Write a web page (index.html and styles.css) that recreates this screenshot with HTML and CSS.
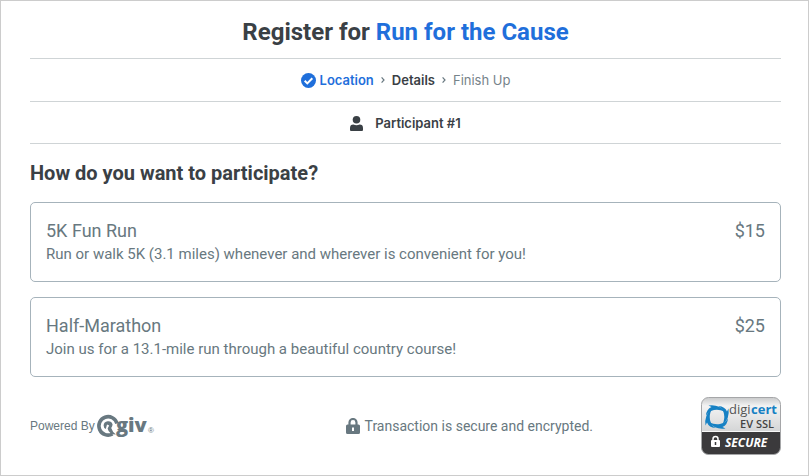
FILE: index.html
```
<!DOCTYPE html>
<html lang="en">
<head>
    <meta charset="UTF-8">
    <meta name="viewport" content="width=device-width, initial-scale=1.0">
    <title>Register for Run for the Cause</title>
    <link rel="stylesheet" href="styles.css">
</head>
<body>
    <div class="page">
        <header class="header">
            <h1>Register for <span class="event-name">Run for the Cause</span></h1>
        </header>

        <nav class="steps" aria-label="Progress">
            <a href="#location" class="step done">
                <svg width="15" height="15" viewBox="0 0 15 15" aria-hidden="true">
                    <circle cx="7.5" cy="7.5" r="7.5" fill="#1f6fdb"/>
                    <path d="M3.7 7.8l2.6 2.6 5-5.2" fill="none" stroke="#fff" stroke-width="2"/>
                </svg>
                Location
            </a>
            <svg class="arrow" width="4" height="6" viewBox="0 0 4 6" aria-hidden="true"><path d="M0.6 0.4L3 3 0.6 5.6"/></svg>
            <span class="step current">Details</span>
            <svg class="arrow" width="4" height="6" viewBox="0 0 4 6" aria-hidden="true"><path d="M0.6 0.4L3 3 0.6 5.6"/></svg>
            <span class="step">Finish Up</span>
        </nav>

        <div class="participant">
            <svg width="13" height="15" viewBox="0 0 13 15" aria-hidden="true">
                <circle cx="6.5" cy="3.8" r="3.8" fill="#3a4045"/>
                <path d="M0 14V12Q0 8.6 3.4 8.6Q6.5 9.7 9.6 8.6Q13 8.6 13 12V14Q13 15 12 15H1Q0 15 0 14Z" fill="#3a4045"/>
            </svg>
            <span>Participant #1</span>
        </div>

        <main>
            <h2>How do you want to participate?</h2>
            <div class="options">
                <button type="button" class="option">
                    <span class="option-row">
                        <span>5K Fun Run</span>
                        <span>$15</span>
                    </span>
                    <span class="option-text">Run or walk 5K (3.1 miles) whenever and wherever is convenient for you!</span>
                </button>
                <button type="button" class="option">
                    <span class="option-row">
                        <span>Half-Marathon</span>
                        <span>$25</span>
                    </span>
                    <span class="option-text">Join us for a 13.1-mile run through a beautiful country course!</span>
                </button>
            </div>
        </main>

        <footer class="footer">
            <div class="powered">
                <span>Powered By</span>
                <svg class="logo" width="59" height="24" viewBox="0 0 59 24" role="img" aria-label="Qgiv">
                    <path d="M15.5 20A9.2 9.2 0 1 1 20 9.5" fill="none" stroke="#687880" stroke-width="3.6"/>
                    <path d="M6.6 11.6A4.6 4.6 0 0 1 15.6 10.6Q15.4 12.6 14.2 14Q15.4 18 19 20.6Q12 20.5 10.6 14.4L12.2 11.4L10 10.4L8.8 15Q6.6 14 6.6 11.6Z" fill="#687880"/>
                    <text class="logo-text" x="19" y="18">giv</text>
                    <text class="logo-reg" x="51" y="19">®</text>
                </svg>
            </div>
            <div class="secure">
                <svg width="14" height="16" viewBox="0 0 14 16" aria-hidden="true">
                    <path d="M3.5 7V4.5a3.5 3.5 0 0 1 7 0V7" fill="none" stroke="#687880" stroke-width="2.2"/>
                    <path fill-rule="evenodd" d="M1.5 6.5h11Q14 6.5 14 8v6.5Q14 16 12.5 16h-11Q0 16 0 14.5V8Q0 6.5 1.5 6.5ZM6 9.5v3.5h2V9.5Z" fill="#687880"/>
                </svg>
                <span>Transaction is secure and encrypted.</span>
            </div>
            <svg class="seal" width="80" height="58" viewBox="0 0 80 58" role="img" aria-label="DigiCert EV SSL Secure">
                <defs>
                    <linearGradient id="silver" x1="0" y1="0" x2="0" y2="1">
                        <stop offset="0" stop-color="#c6c7c8"/>
                        <stop offset="0.25" stop-color="#f3f3f3"/>
                        <stop offset="1" stop-color="#d2d3d4"/>
                    </linearGradient>
                    <clipPath id="seal-shape"><rect x="0.5" y="0.5" width="79" height="57" rx="7"/></clipPath>
                </defs>
                <g clip-path="url(#seal-shape)">
                    <rect width="80" height="36" fill="url(#silver)"/>
                    <rect y="35" width="80" height="23" fill="#3b3a3c"/>
                    <rect y="34" width="80" height="1" fill="#f8f8f8"/>
                </g>
                <rect x="0.5" y="0.5" width="79" height="57" rx="7" fill="none" stroke="#a5a6a8"/>
                <g fill="#1681c4">
                    <path id="blade" d="M5 18.5Q5.500 12 10.500 10L7.500 8.500Q18 7 23.500 14.500Q18 12 13 13Q8 14 5 18.500Z"/>
                    <use href="#blade" transform="rotate(90 16 20)"/>
                    <use href="#blade" transform="rotate(180 16 20)"/>
                    <use href="#blade" transform="rotate(270 16 20)"/>
                </g>
                <text class="seal-brand" x="28" y="17">digi</text>
                <text class="seal-brand seal-cert" x="76" y="17" text-anchor="end">cert</text>
                <text class="seal-type" x="73" y="31" text-anchor="end">EV SSL</text>
                <path d="M12 44v-2a2.5 2.5 0 0 1 5 0v2" fill="none" stroke="#fff" stroke-width="1.5"/>
                <rect x="10" y="43" width="9" height="7" rx="1" fill="#fff"/>
                <path d="M14.5 45v3" stroke="#3b3a3c" stroke-width="1.5"/>
                <text class="seal-secure" x="24" y="50">SECURE</text>
            </svg>
        </footer>
    </div>
</body>
</html>
```

FILE: styles.css
```
* {
    box-sizing: border-box;
}
body {
    margin: 0;
    font-family: Roboto, "Liberation Sans", sans-serif;
    color: #3a4045;
    background-color: #fff;
}
.page {
    min-height: 100vh;
    padding: 0 27px 0 29px;
    border: 1px solid #ccc;
}
.header {
    height: 58px;
    padding-top: 16px;
    border-bottom: 1px solid #cfd4d6;
}
h1 {
    margin: 0;
    font-size: 24px;
    line-height: 30px;
    font-weight: bold;
    text-align: center;
}
.event-name {
    color: #1f6fdb;
}
.steps,
.participant {
    display: flex;
    align-items: center;
    justify-content: center;
    border-bottom: 1px solid #cfd4d6;
    font-family: Inter, Roboto, sans-serif;
    font-size: 13px;
    line-height: 18px;
    padding: 12px 0;
}
.steps {
    gap: 7px;
}
.step {
    color: #76838a;
}
.step.done {
    display: flex;
    align-items: center;
    gap: 4px;
    color: #1f6fdb;
    font-weight: 600;
    text-decoration: none;
}
.step.current {
    color: #3a4045;
    font-weight: 600;
}
.arrow path {
    fill: none;
    stroke: #687880;
    stroke-width: 1.2;
}
.participant {
    gap: 12px;
    padding-bottom: 11px;
    font-weight: 600;
}
h2 {
    margin: 0;
    padding: 17px 0;
    font-size: 20px;
    line-height: 24px;
    font-weight: bold;
}
.options {
    display: grid;
    gap: 15px;
}
.option {
    display: block;
    width: 100%;
    padding: 16px 15px;
    border: 1px solid #a6b3bb;
    border-radius: 5px;
    background-color: #fff;
    color: #687880;
    font-family: inherit;
    text-align: left;
    cursor: pointer;
}
.option:hover {
    border-color: #1f6fdb;
}
.option-row {
    display: flex;
    justify-content: space-between;
    font-size: 18px;
    line-height: 24px;
}
.option-text {
    display: block;
    font-size: 15px;
    line-height: 22px;
}
.footer {
    display: grid;
    grid-template-columns: 1fr auto auto;
    align-items: center;
    column-gap: 108px;
    padding: 20px 0;
    color: #687880;
}
.powered {
    display: flex;
    align-items: center;
    gap: 2px;
    font-family: "Liberation Sans", Arial, sans-serif;
    font-size: 12px;
}
.secure {
    display: flex;
    align-items: center;
    gap: 5px;
    font-size: 14px;
}
.logo {
    overflow: visible;
}
.logo-text {
    font-family: "Open Sans", sans-serif;
    font-size: 20px;
    font-weight: 800;
    fill: #687880;
}
.logo-reg {
    font-size: 8px;
    fill: #687880;
}
.seal-brand,
.seal-type,
.seal-secure {
    font-family: "Open Sans", sans-serif;
}
.seal-brand {
    font-size: 13px;
    fill: #555;
}
.seal-cert {
    font-weight: bold;
    fill: #1681c4;
}
.seal-type {
    font-size: 11px;
    font-weight: 600;
    fill: #444;
}
.seal-secure {
    font-size: 12px;
    font-weight: bold;
    font-style: italic;
    fill: #fff;
}
```
